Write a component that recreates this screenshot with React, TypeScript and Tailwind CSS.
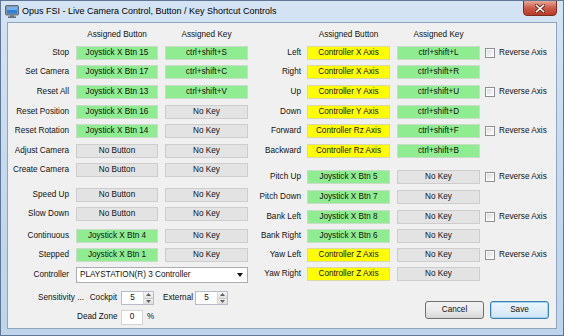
import React from "react";

type C = "g" | "y" | "n";

const boxCls: Record<C, string> = {
  g: "bg-[#90ec90] border-[#c9dcc9]",
  y: "bg-[#ffff00] border-[#d8d8a8]",
  n: "bg-[#e3e3e3] border-[#cdcdcd]",
};

function Box({ text, c, w }: { text: string; c: C; w: string }) {
  return (
    <div
      className={`${w} h-[14px] border ${boxCls[c]} flex items-center justify-center leading-none whitespace-nowrap`}
    >
      {text}
    </div>
  );
}

const leftRows: { label: string; b: string; bc: C; k: string; kc: C; mt: string }[] = [
  { label: "Stop", b: "Joystick X Btn 15", bc: "g", k: "ctrl+shift+S", kc: "g", mt: "mt-[4px]" },
  { label: "Set Camera", b: "Joystick X Btn 17", bc: "g", k: "ctrl+shift+C", kc: "g", mt: "mt-[5px]" },
  { label: "Reset All", b: "Joystick X Btn 13", bc: "g", k: "ctrl+shift+V", kc: "g", mt: "mt-[6px]" },
  { label: "Reset Position", b: "Joystick X Btn 16", bc: "g", k: "No Key", kc: "n", mt: "mt-[6px]" },
  { label: "Reset Rotation", b: "Joystick X Btn 14", bc: "g", k: "No Key", kc: "n", mt: "mt-[5px]" },
  { label: "Adjust Camera", b: "No Button", bc: "n", k: "No Key", kc: "n", mt: "mt-[6px]" },
  { label: "Create Camera", b: "No Button", bc: "n", k: "No Key", kc: "n", mt: "mt-[5px]" },
  { label: "Speed Up", b: "No Button", bc: "n", k: "No Key", kc: "n", mt: "mt-[11px]" },
  { label: "Slow Down", b: "No Button", bc: "n", k: "No Key", kc: "n", mt: "mt-[5px]" },
  { label: "Continuous", b: "Joystick X Btn 4", bc: "g", k: "No Key", kc: "n", mt: "mt-[8px]" },
  { label: "Stepped", b: "Joystick X Btn 1", bc: "g", k: "No Key", kc: "n", mt: "mt-[5px]" },
];

const rightRows: { label: string; b: string; bc: C; k: string; kc: C; mt: string; rev: boolean }[] = [
  { label: "Left", b: "Controller X Axis", bc: "y", k: "ctrl+shift+L", kc: "g", mt: "mt-[4px]", rev: true },
  { label: "Right", b: "Controller X Axis", bc: "y", k: "ctrl+shift+R", kc: "g", mt: "mt-[5px]", rev: false },
  { label: "Up", b: "Controller Y Axis", bc: "y", k: "ctrl+shift+U", kc: "g", mt: "mt-[6px]", rev: true },
  { label: "Down", b: "Controller Y Axis", bc: "y", k: "ctrl+shift+D", kc: "g", mt: "mt-[6px]", rev: false },
  { label: "Forward", b: "Controller Rz Axis", bc: "y", k: "ctrl+shift+F", kc: "g", mt: "mt-[5px]", rev: true },
  { label: "Backward", b: "Controller Rz Axis", bc: "y", k: "ctrl+shift+B", kc: "g", mt: "mt-[6px]", rev: false },
  { label: "Pitch Up", b: "Joystick X Btn 5", bc: "g", k: "No Key", kc: "n", mt: "mt-[12px]", rev: true },
  { label: "Pitch Down", b: "Joystick X Btn 7", bc: "g", k: "No Key", kc: "n", mt: "mt-[6px]", rev: false },
  { label: "Bank Left", b: "Joystick X Btn 8", bc: "g", k: "No Key", kc: "n", mt: "mt-[6px]", rev: true },
  { label: "Bank Right", b: "Joystick X Btn 6", bc: "g", k: "No Key", kc: "n", mt: "mt-[5px]", rev: false },
  { label: "Yaw Left", b: "Controller Z Axis", bc: "y", k: "No Key", kc: "n", mt: "mt-[5px]", rev: true },
  { label: "Yaw Right", b: "Controller Z Axis", bc: "y", k: "No Key", kc: "n", mt: "mt-[5px]", rev: false },
];

function Check() {
  return (
    <div className="w-[10px] h-[10px] border border-[#8e8f8f] bg-white p-[1px]">
      <div className="w-full h-full bg-gradient-to-br from-[#dcdcdc] to-[#fbfbfb]" />
    </div>
  );
}

function Spin({ v }: { v: string }) {
  return (
    <div className="w-[33px] h-[14px] border border-[#b6bdc6] bg-white flex">
      <div className="flex-1 flex items-center justify-center leading-none">{v}</div>
      <div className="w-[10px] flex flex-col border-l border-[#d8d8d8]">
        <div className="flex-1 bg-gradient-to-b from-[#f6f6f6] to-[#e2e2e2] border-b border-[#c8c8c8] flex items-center justify-center">
          <svg width="5" height="3" viewBox="0 0 5 3"><path d="M0 3 L2.5 0 L5 3Z" fill="#606060" /></svg>
        </div>
        <div className="flex-1 bg-gradient-to-b from-[#f2f2f2] to-[#dedede] flex items-center justify-center">
          <svg width="5" height="3" viewBox="0 0 5 3"><path d="M0 0 L2.5 3 L5 0Z" fill="#606060" /></svg>
        </div>
      </div>
    </div>
  );
}

export default function App() {
  return (
    <div className="w-[564px] h-[336px] font-['Liberation_Sans',Arial,sans-serif] text-[8.2px] text-[#111] bg-gradient-to-b from-[#d5e4f4] via-[#c6d9ee] to-[#bfd4ea] border border-[#5f7794] flex flex-col overflow-hidden">
      {/* Title bar */}
      <div className="h-[21px] flex items-start relative">
        <svg className="ml-[4px] mt-[4px]" width="14" height="13" viewBox="0 0 14 13">
          <rect x="0.5" y="0.5" width="13" height="9.5" rx="1" fill="#8a96a4" stroke="#4b5563" strokeWidth="0.8" />
          <rect x="2" y="2" width="10" height="6.5" fill="#2f7fd6" />
          <rect x="2" y="2" width="10" height="3" fill="#6eb3f0" />
          <rect x="5" y="10.3" width="4" height="1.4" fill="#6b7280" />
          <rect x="3" y="11.5" width="8" height="1.3" fill="#4b5563" />
        </svg>
        <div className="ml-[3px] mt-[6px] text-[9px] text-black leading-none whitespace-nowrap">
          Opus FSI - Live Camera Control, Button / Key Shortcut Controls
        </div>
        <div className="absolute right-[6px] top-[-1px] w-[34px] h-[16px] rounded-b-[4px] border border-[#7b2d24] bg-gradient-to-b from-[#e4a79c] via-[#cc5a48] to-[#b93a26] flex items-center justify-center">
          <svg width="10" height="9" viewBox="0 0 10 9">
            <path d="M1.5 1.5 L8.5 7.5 M8.5 1.5 L1.5 7.5" stroke="#5a1a12" strokeWidth="3" strokeLinecap="square" />
            <path d="M1.5 1.5 L8.5 7.5 M8.5 1.5 L1.5 7.5" stroke="#ffffff" strokeWidth="1.6" strokeLinecap="square" />
          </svg>
        </div>
      </div>
      {/* Client */}
      <div className="mx-[6px] h-[307px] border border-[#8fa5bf] bg-[#f0f0f0] flex pt-[5px]">
        {/* Left block */}
        <div className="w-[240px] flex flex-col">
          <div className="h-[14px] flex items-center">
            <div className="w-[68px]" />
            <div className="w-[82px] text-center">Assigned Button</div>
            <div className="w-[7px]" />
            <div className="w-[83px] text-center">Assigned Key</div>
          </div>
          {leftRows.map((r) => (
            <div key={r.label} className={`${r.mt} flex items-center`}>
              <div className="w-[62px] text-right pr-[1px] whitespace-nowrap">{r.label}</div>
              <div className="w-[6px]" />
              <Box text={r.b} c={r.bc} w="w-[82px]" />
              <div className="w-[7px]" />
              <Box text={r.k} c={r.kc} w="w-[83px]" />
            </div>
          ))}
          <div className="mt-[5px] flex items-center">
            <div className="w-[62px] text-right pr-[1px]">Controller</div>
            <div className="w-[6px]" />
            <div className="w-[172px] h-[16px] border border-[#abadb3] bg-white flex items-center pl-[3px] pr-[4px]">
              <span className="flex-1">PLAYSTATION(R) 3 Controller</span>
              <svg width="6" height="4" viewBox="0 0 6 4"><path d="M0 0 L3 4 L6 0Z" fill="#111" /></svg>
            </div>
          </div>
          <div className="mt-[8px] flex items-center whitespace-nowrap">
            <div className="w-[30px]" />
            <div className="w-[44px]">Sensitivity ...</div>
            <div className="w-[35px] text-right">Cockpit</div>
            <div className="w-[4px]" />
            <Spin v="5" />
            <div className="w-[9px]" />
            <div className="w-[28px] text-right">External</div>
            <div className="w-[4px]" />
            <Spin v="5" />
          </div>
          <div className="mt-[5px] flex items-center whitespace-nowrap">
            <div className="w-[69px]" />
            <div className="w-[40px] text-right">Dead Zone</div>
            <div className="w-[4px]" />
            <div className="w-[22px] h-[15px] border border-[#d4d4d4] bg-white flex items-center justify-center">0</div>
            <div className="w-[4px]" />
            <div>%</div>
          </div>
        </div>
        {/* Right block */}
        <div className="flex-1 flex flex-col">
          <div className="h-[14px] flex items-center">
            <div className="w-[59px]" />
            <div className="w-[83px] text-center">Assigned Button</div>
            <div className="w-[7px]" />
            <div className="w-[83px] text-center">Assigned Key</div>
          </div>
          {rightRows.map((r) => (
            <div key={r.label} className={`${r.mt} flex items-center`}>
              <div className="w-[54px] text-right pr-[1px] whitespace-nowrap">{r.label}</div>
              <div className="w-[5px]" />
              <Box text={r.b} c={r.bc} w="w-[83px]" />
              <div className="w-[7px]" />
              <Box text={r.k} c={r.kc} w="w-[83px]" />
              {r.rev && (
                <div className="ml-[5px] flex items-center">
                  <Check />
                  <div className="ml-[4px]">Reverse Axis</div>
                </div>
              )}
            </div>
          ))}
          <div className="mt-[20px] flex justify-end pr-[7px] gap-[6px]">
            <div className="w-[59px] h-[18px] rounded-[3px] border border-[#707070] bg-gradient-to-b from-[#f2f2f2] via-[#ebebeb] to-[#d6d6d6] flex items-center justify-center">
              Cancel
            </div>
            <div className="w-[59px] h-[18px] rounded-[3px] border border-[#3c7fb1] bg-gradient-to-b from-[#eaf6fd] via-[#e0eef8] to-[#cde4f3] flex items-center justify-center shadow-[inset_0_0_0_1px_#a6d4f0]">
              Save
            </div>
          </div>
        </div>
      </div>
    </div>
  );
}
